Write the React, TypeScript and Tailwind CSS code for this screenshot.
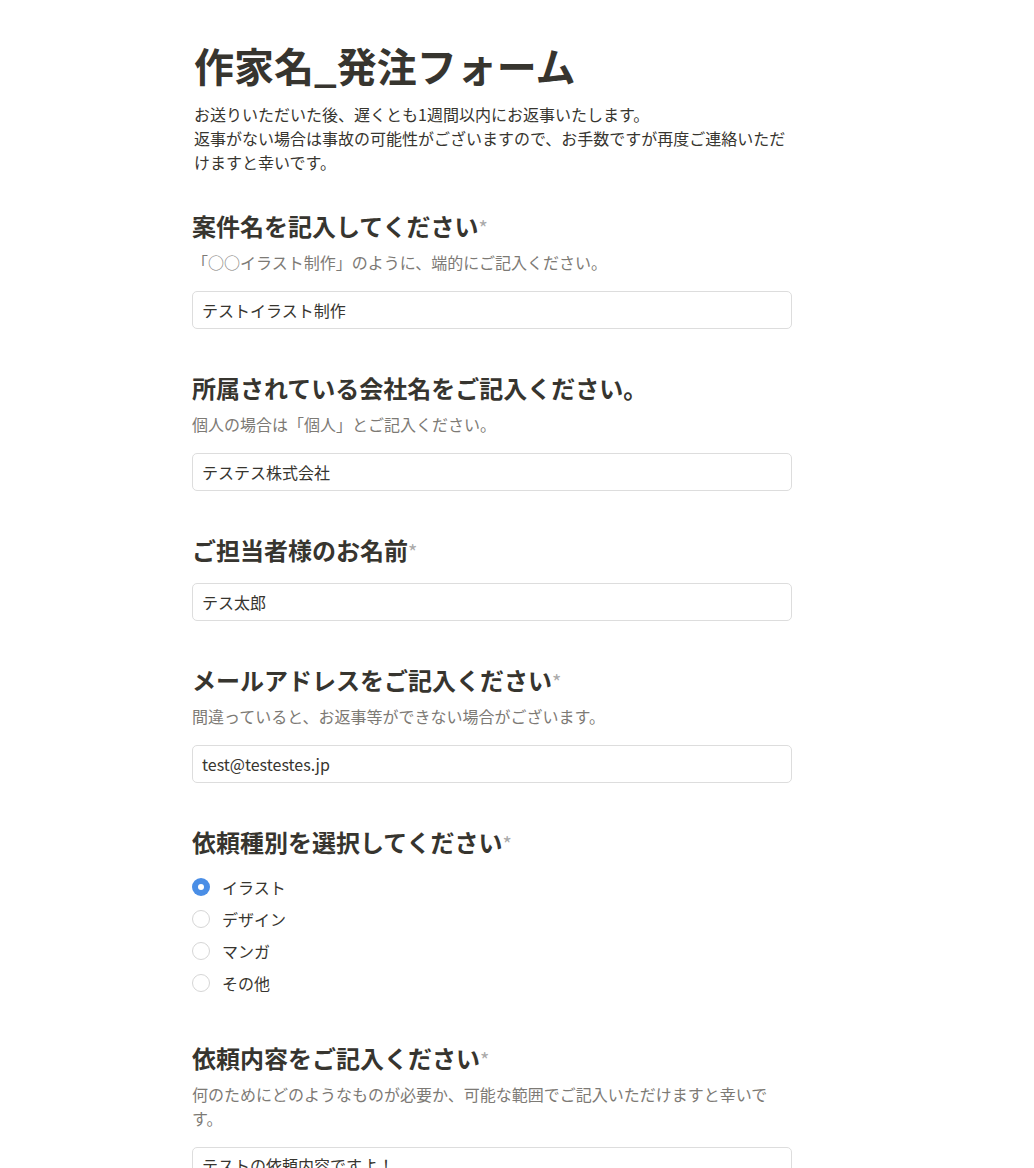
import React, { useState } from "react";

const font = {
  fontFamily: '"Noto Sans CJK JP", "Noto Sans", sans-serif',
};

type FieldProps = {
  label: string;
  required?: boolean;
  help?: string;
  children: React.ReactNode;
};

const Field: React.FC<FieldProps> = ({ label, required, help, children }) => (
  <div className="mb-[44px]">
    <h2 className="text-[24px] leading-[30px] font-bold text-[#37352f]">
      {label}
      {required && <span className="text-[#aaaaaa] font-normal text-[20px] leading-[20px]">*</span>}
    </h2>
    {help && (
      <p className="mt-[9px] text-[16px] leading-[24px] text-[#7d7a75] pr-[24px]">{help}</p>
    )}
    <div className={help ? "mt-[17px]" : "mt-[18px]"}>{children}</div>
  </div>
);

const TextInput: React.FC<{ value: string }> = ({ value }) => (
  <input
    defaultValue={value}
    className="w-full h-[38px] px-[9px] rounded-[5px] border border-[#dddddd] text-[16px] text-[#37352f] outline-none bg-white"
    style={font}
  />
);

const options = ["イラスト", "デザイン", "マンガ", "その他"];

export default function App() {
  const [kind, setKind] = useState("イラスト");

  return (
    <div className="min-h-screen bg-white text-[#37352f]" style={font}>
      <div className="w-[650px] mx-auto pt-[41px] pb-10">
        <div className="w-[600px]">
          <h1 className="text-[40px] leading-[48px] font-bold pl-[2px]">作家名_発注フォーム</h1>
          <p className="mt-[13px] text-[16px] leading-[24px] pl-[2px]">
            お送りいただいた後、遅くとも1週間以内にお返事いたします。
            <br />
            返事がない場合は事故の可能性がございますので、お手数ですが再度ご連絡いただけますと幸いです。
          </p>

          <div className="mt-[37px]">
            <Field
              label="案件名を記入してください"
              required
              help="「○○イラスト制作」のように、端的にご記入ください。"
            >
              <TextInput value="テストイラスト制作" />
            </Field>

            <Field
              label="所属されている会社名をご記入ください。"
              help="個人の場合は「個人」とご記入ください。"
            >
              <TextInput value="テステス株式会社" />
            </Field>

            <Field label="ご担当者様のお名前" required>
              <TextInput value="テス太郎" />
            </Field>

            <Field
              label="メールアドレスをご記入ください"
              required
              help="間違っていると、お返事等ができない場合がございます。"
            >
              <TextInput value="test@testestes.jp" />
            </Field>

            <div className="mb-[44px]">
              <h2 className="text-[24px] leading-[30px] font-bold">
                依頼種別を選択してください
                <span className="text-[#aaaaaa] font-normal text-[20px] leading-[20px]">*</span>
              </h2>
              <div className="mt-[14px] flex flex-col">
                {options.map((o) => (
                  <label
                    key={o}
                    className="flex items-center h-[32px] cursor-pointer"
                    onClick={() => setKind(o)}
                  >
                    {kind === o ? (
                      <span className="w-[18px] h-[18px] rounded-full bg-[#4a8ee6] flex items-center justify-center">
                        <span className="w-[6px] h-[6px] rounded-full bg-white" />
                      </span>
                    ) : (
                      <span className="w-[18px] h-[18px] rounded-full border-[1.5px] border-[#d6d6d6] bg-white" />
                    )}
                    <span className="ml-[12px] text-[16px]">{o}</span>
                  </label>
                ))}
              </div>
            </div>

            <Field
              label="依頼内容をご記入ください"
              required
              help="何のためにどのようなものが必要か、可能な範囲でご記入いただけますと幸いです。"
            >
              <textarea
                defaultValue="テストの依頼内容ですよ！"
                className="w-full h-[120px] px-[9px] py-[5px] rounded-[5px] border border-[#dddddd] text-[16px] leading-[24px] text-[#37352f] outline-none resize-none"
                style={font}
              />
            </Field>
          </div>
        </div>
      </div>
    </div>
  );
}
